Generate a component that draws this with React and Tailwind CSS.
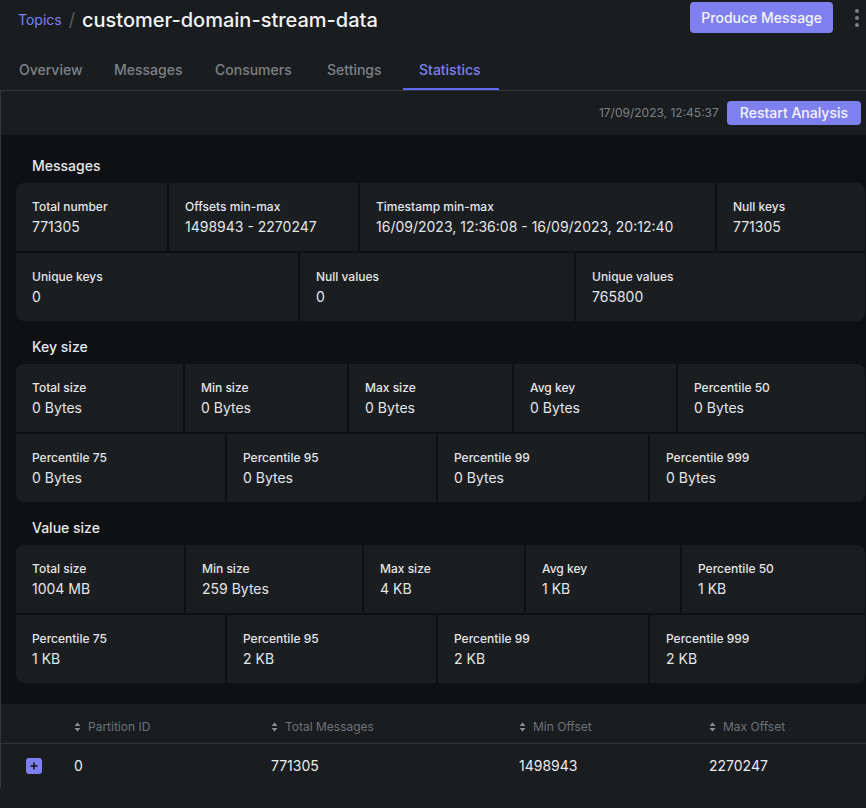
// Topic statistics page (dark theme)

const tabs = [
  ['Overview', 'w-[95px]'],
  ['Messages', 'w-[101px]'],
  ['Consumers', 'w-[112px]'],
  ['Settings', 'w-[92px]'],
  ['Statistics', 'w-[96px]'],
]

const sections = [
  {
    title: 'Messages',
    rows: [
      [
        ['Total number', '771305', 'w-[151px]'],
        ['Offsets min-max', '1498943 - 2270247', 'w-[189px]'],
        ['Timestamp min-max', '16/09/2023, 12:36:08 - 16/09/2023, 20:12:40', 'w-[355px]'],
        ['Null keys', '771305', 'flex-1'],
      ],
      [
        ['Unique keys', '0', 'w-[282px]'],
        ['Null values', '0', 'w-[274px]'],
        ['Unique values', '765800', 'flex-1'],
      ],
    ],
  },
  {
    title: 'Key size',
    rows: [
      [
        ['Total size', '0 Bytes', 'w-[167px]'],
        ['Min size', '0 Bytes', 'w-[162px]'],
        ['Max size', '0 Bytes', 'w-[163px]'],
        ['Avg key', '0 Bytes', 'w-[162px]'],
        ['Percentile 50', '0 Bytes', 'flex-1'],
      ],
      [
        ['Percentile 75', '0 Bytes', 'w-[209px]'],
        ['Percentile 95', '0 Bytes', 'w-[209px]'],
        ['Percentile 99', '0 Bytes', 'w-[210px]'],
        ['Percentile 999', '0 Bytes', 'flex-1'],
      ],
    ],
  },
  {
    title: 'Value size',
    rows: [
      [
        ['Total size', '1004 MB', 'w-[168px]'],
        ['Min size', '259 Bytes', 'w-[176px]'],
        ['Max size', '4 KB', 'w-[160px]'],
        ['Avg key', '1 KB', 'w-[154px]'],
        ['Percentile 50', '1 KB', 'flex-1'],
      ],
      [
        ['Percentile 75', '1 KB', 'w-[209px]'],
        ['Percentile 95', '2 KB', 'w-[209px]'],
        ['Percentile 99', '2 KB', 'w-[210px]'],
        ['Percentile 999', '2 KB', 'flex-1'],
      ],
    ],
  },
]

const columns = [
  ['Partition ID', 'w-[197px]'],
  ['Total Messages', 'w-[248px]'],
  ['Min Offset', 'w-[190px]'],
  ['Max Offset', 'flex-1'],
]

function SortIcon() {
  return (
    <svg width="7" height="10" viewBox="0 0 7 10" className="shrink-0 mr-[7px]">
      <path d="M3.5 0.5 L6.5 4 L0.5 4 Z" fill="#8b9096" />
      <path d="M3.5 9.5 L6.5 6 L0.5 6 Z" fill="#8b9096" />
    </svg>
  )
}

function StatCell({ label, value, width }) {
  return (
    <div className={`${width} h-[68px] bg-[#1b1e21] pl-4 pt-[14px]`}>
      <div className="text-xs leading-5 font-medium text-[#e3e5e8]">{label}</div>
      <div className="text-sm leading-5 text-[#e3e5e8]">{value}</div>
    </div>
  )
}

export default function App() {
  return (
    <div className="min-h-screen bg-[#1a1d20] font-['Inter',sans-serif] text-[#e6e8eb]">
      {/* Header */}
      <div className="h-[50px] flex items-start justify-between pl-[18px] pr-[7px] pt-[2px]">
        <div className="flex items-center h-[35px] gap-[7px]">
          <span className="text-sm text-[#7e80f0]">Topics</span>
          <span className="text-[18px] text-[#6b7076] font-light">/</span>
          <span className="text-xl font-medium text-[#f1f2f4]">customer-domain-stream-data</span>
        </div>
        <div className="flex items-center gap-[22px]">
          <button className="h-[31px] px-[11px] rounded-[4px] bg-[#7e80f0] text-sm font-medium text-[#f4f4ff]">
            Produce Message
          </button>
          <div className="flex flex-col gap-[3px] items-center">
            <span className="w-[4px] h-[4px] rounded-full bg-[#7b8188]" />
            <span className="w-[4px] h-[4px] rounded-full bg-[#7b8188]" />
            <span className="w-[4px] h-[4px] rounded-full bg-[#7b8188]" />
          </div>
        </div>
      </div>

      {/* Tabs */}
      <div className="flex h-[41px] border-b border-[#33373b] pl-[3px]">
        {tabs.map(([t, w]) => (
          <div
            key={t}
            className={`${w} pl-4 flex items-center text-sm font-medium ${
              t === 'Statistics'
                ? 'text-[#7e80f0] border-b-2 border-[#6366f1] pt-[2px]'
                : 'text-[#7c8289]'
            }`}
          >
            {t}
          </div>
        ))}
      </div>

      <div className="border-l border-[#33373b]">
        {/* Analysis bar */}
        <div className="h-[44px] flex items-center justify-end gap-2 pr-[5px]">
          <span className="text-xs text-[#7c8187]">17/09/2023, 12:45:37</span>
          <button className="h-[24px] px-[13px] rounded-[4px] bg-[#7e80f0] text-sm font-medium text-[#f4f4ff]">
            Restart Analysis
          </button>
        </div>

        {/* Statistics */}
        <div className="bg-[#0e1012] pt-[19px] pb-[21px] pl-[15px] pr-px">
          {sections.map((s, i) => (
            <div key={s.title} className={i > 0 ? 'mt-[14px]' : ''}>
              <div className="h-6 leading-6 pl-4 text-sm font-medium text-[#e6e8eb] mb-[5px]">{s.title}</div>
              <div className="rounded-lg overflow-hidden flex flex-col gap-[2px]">
                {s.rows.map((row, ri) => (
                  <div key={ri} className="flex gap-[2px]">
                    {row.map(([label, value, width]) => (
                      <StatCell key={label} label={label} value={value} width={width} />
                    ))}
                  </div>
                ))}
              </div>
            </div>
          ))}
        </div>

        {/* Partitions table */}
        <div className="h-[40px] pt-[6px] flex items-center border-b border-[#303438]">
          <div className="w-[73px]" />
          {columns.map(([c, w]) => (
            <div key={c} className={`${w} flex items-center text-xs text-[#6d7279]`}>
              <SortIcon />
              {c}
            </div>
          ))}
        </div>
        <div className="h-[44px] flex items-center">
          <div className="w-[73px] pl-[25px]">
            <div className="w-4 h-4 rounded-[3px] bg-[#7e80f0] flex items-center justify-center">
              <svg width="8" height="8" viewBox="0 0 8 8">
                <path d="M4 0.5 V7.5 M0.5 4 H7.5" stroke="#111316" strokeWidth="1.6" />
              </svg>
            </div>
          </div>
          <div className="w-[197px] text-sm text-[#e9ebee]">0</div>
          <div className="w-[248px] text-sm text-[#e9ebee]">771305</div>
          <div className="w-[190px] text-sm text-[#e9ebee]">1498943</div>
          <div className="flex-1 text-sm text-[#e9ebee]">2270247</div>
        </div>
      </div>
    </div>
  )
}
